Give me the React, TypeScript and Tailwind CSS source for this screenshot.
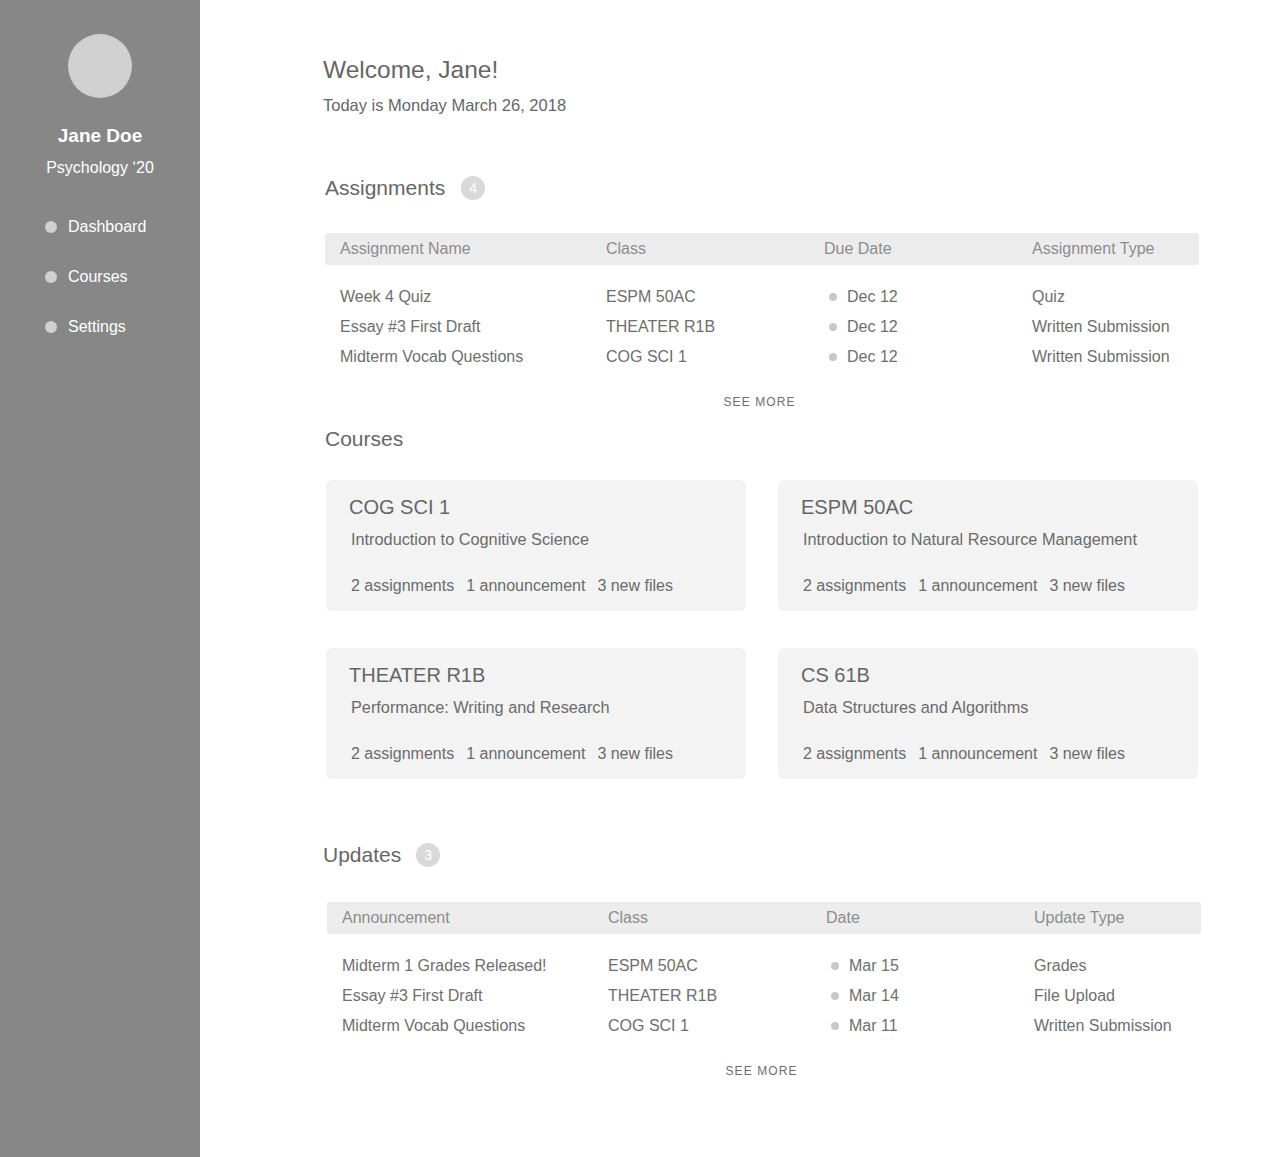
const assignments = [
    { name: "Week 4 Quiz", cls: "ESPM 50AC", date: "Dec 12", type: "Quiz" },
    { name: "Essay #3 First Draft", cls: "THEATER R1B", date: "Dec 12", type: "Written Submission" },
    { name: "Midterm Vocab Questions", cls: "COG SCI 1", date: "Dec 12", type: "Written Submission" },
];

const updates = [
    { name: "Midterm 1 Grades Released!", cls: "ESPM 50AC", date: "Mar 15", type: "Grades" },
    { name: "Essay #3 First Draft", cls: "THEATER R1B", date: "Mar 14", type: "File Upload" },
    { name: "Midterm Vocab Questions", cls: "COG SCI 1", date: "Mar 11", type: "Written Submission" },
];

const courses = [
    { code: "COG SCI 1", title: "Introduction to Cognitive Science" },
    { code: "ESPM 50AC", title: "Introduction to Natural Resource Management" },
    { code: "THEATER R1B", title: "Performance: Writing and Research" },
    { code: "CS 61B", title: "Data Structures and Algorithms" },
];

type Row = { name: string; cls: string; date: string; type: string };

function Badge({ n }: { n: number }) {
    return (
        <span className="flex items-center justify-center w-6 h-6 rounded-full bg-[#d9d9d9] text-white text-[14px] leading-none">
            {n}
        </span>
    );
}

function Table({ headers, rows, className }: { headers: string[]; rows: Row[]; className: string }) {
    const cols = "grid grid-cols-[266px_218px_208px_1fr] pl-[15px]";
    return (
        <div className={`w-[874px] ${className}`}>
            <div className={`${cols} h-8 items-center bg-[#ececec] rounded-[3px] text-[16px] text-[#8c8c8c]`}>
                {headers.map((h) => (
                    <span key={h}>{h}</span>
                ))}
            </div>
            <div className="mt-[17px] text-[16px] text-[#6e6e6e]">
                {rows.map((r) => (
                    <div key={r.name + r.date} className={`${cols} h-[30px] items-center`}>
                        <span>{r.name}</span>
                        <span>{r.cls}</span>
                        <span className="flex items-center">
                            <span className="ml-[5px] mr-[10px] w-2 h-2 rounded-full bg-[#c8c8c8]" />
                            {r.date}
                        </span>
                        <span>{r.type}</span>
                    </div>
                ))}
            </div>
            <div className="mt-[22px] pr-[5px] text-center text-[12px] leading-4 tracking-[0.09em] text-[#6e6e6e]">
                SEE MORE
            </div>
        </div>
    );
}

export default function App() {
    return (
        <div className="flex min-h-[1157px] bg-white font-['Liberation_Sans',Arial,sans-serif]">
            <aside className="w-[200px] shrink-0 bg-[#878787] flex flex-col items-center pt-[34px] text-white">
                <div className="w-16 h-16 rounded-full bg-[#d0d0d0]" />
                <div className="mt-[26px] text-[19px] leading-6 font-bold">Jane Doe</div>
                <div className="mt-[10px] text-[16px] leading-5">Psychology ‘20</div>
                <nav className="mt-[39px] self-start pl-[45px] flex flex-col gap-[30px] text-[16px]">
                    {["Dashboard", "Courses", "Settings"].map((item) => (
                        <a key={item} href="#" className="flex items-center h-5 leading-5">
                            <span className="w-3 h-3 rounded-full bg-[#d0d0d0] mr-[11px]" />
                            {item}
                        </a>
                    ))}
                </nav>
            </aside>

            <main className="flex-1 pl-[123px] pt-[54px] text-[#6b6b6b]">
                <h1 className="text-[24.5px] leading-8 text-[#666]">Welcome, Jane!</h1>
                <p className="mt-[9px] text-[16.5px] leading-5 text-[#666]">Today is Monday March 26, 2018</p>

                <div className="mt-[59px] ml-[2px] flex items-center gap-4 h-7">
                    <h2 className="text-[21px] leading-7 text-[#666]">Assignments</h2>
                    <Badge n={4} />
                </div>
                <Table
                    className="mt-[31px] ml-[2px]"
                    headers={["Assignment Name", "Class", "Due Date", "Assignment Type"]}
                    rows={assignments}
                />

                <h2 className="mt-[15px] ml-[2px] text-[21px] leading-7 text-[#666]">Courses</h2>
                <div className="mt-[27px] ml-[3px] w-[872px] grid grid-cols-2 gap-x-8 gap-y-[37px]">
                    {courses.map((c) => (
                        <div key={c.code} className="h-[131px] rounded-md bg-[#f3f3f3] pl-[23px] pt-[15px]">
                            <div className="text-[20px] leading-6 text-[#666]">{c.code}</div>
                            <div className="mt-[10px] ml-[2px] text-[16.3px] leading-5">{c.title}</div>
                            <div className="mt-[27px] ml-[2px] flex gap-3 text-[16px] leading-5">
                                <span>2 assignments</span>
                                <span>1 announcement</span>
                                <span>3 new files</span>
                            </div>
                        </div>
                    ))}
                </div>

                <div className="mt-[62px] flex items-center gap-[15px] h-7">
                    <h2 className="text-[21px] leading-7 text-[#666]">Updates</h2>
                    <Badge n={3} />
                </div>
                <Table
                    className="mt-[33px] ml-1"
                    headers={["Announcement", "Class", "Date", "Update Type"]}
                    rows={updates}
                />
            </main>
        </div>
    );
}
